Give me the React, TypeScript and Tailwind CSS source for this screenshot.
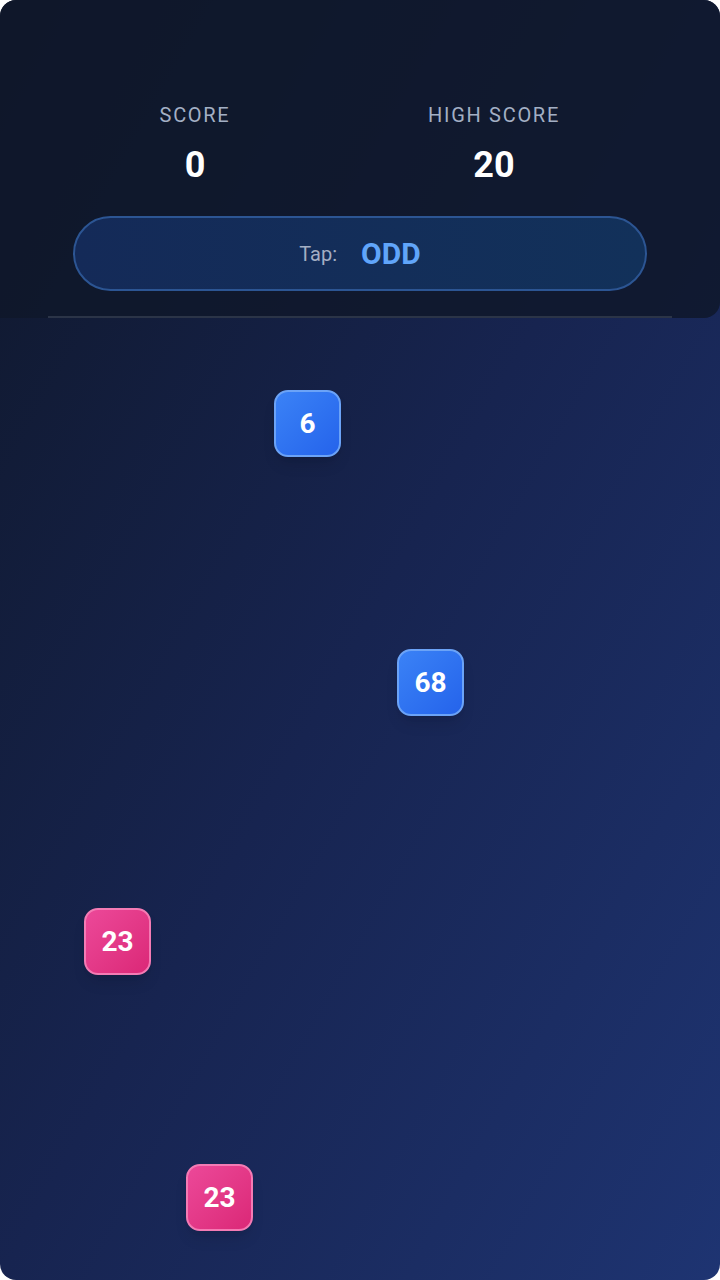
import React from "react";

const tiles = [
  { n: "6", x: 274, y: 390, c: "blue" },
  { n: "68", x: 397, y: 649, c: "blue" },
  { n: "23", x: 84, y: 908, c: "pink" },
  { n: "23", x: 186, y: 1164, c: "pink" },
];

export default function App() {
  return (
    <div className="w-[720px] h-[1280px] bg-white" style={{ fontFamily: "Roboto, 'Noto Sans', sans-serif" }}>
      <div className="relative w-full h-full rounded-2xl overflow-hidden bg-gradient-to-br from-[#0f172a] via-[#172450] to-[#1e3472]">
        <div className="w-full bg-[#0f172a]/85 rounded-br-2xl pt-[103px] flex flex-col">
          <div className="flex pl-[95px] gap-[99px]">
            <div className="w-[200px] flex flex-col items-center">
              <div className="text-[20px] leading-6 tracking-[0.085em] text-[#a3afc4]">SCORE</div>
              <div className="mt-[18px] text-[36px] leading-[40px] font-bold text-white">0</div>
            </div>
            <div className="w-[200px] flex flex-col items-center">
              <div className="text-[20px] leading-6 tracking-[0.085em] text-[#a3afc4]">HIGH SCORE</div>
              <div className="mt-[18px] text-[36px] leading-[40px] font-bold text-white">20</div>
            </div>
          </div>
          <div className="mx-[73px] mt-[31px] h-[75px] rounded-full border-2 border-[#2c5593] bg-gradient-to-r from-[#142a58] to-[#12315a] flex items-center justify-center gap-[24px]">
            <span className="text-[20px] text-[#a3afc4]">Tap:</span>
            <span className="text-[30px] font-bold text-[#60a5fa]">ODD</span>
          </div>
          <div className="mx-[48px] mt-[25px] h-[2px] bg-[#2b3447]" />
        </div>
        {tiles.map((t, i) => (
          <div
            key={i}
            className={
              "absolute w-[67px] h-[67px] rounded-[14px] border-2 flex items-center justify-center text-white font-bold text-[28px] shadow-lg " +
              (t.c === "blue"
                ? "bg-gradient-to-br from-[#3b82f6] to-[#2563eb] border-[#6ba3f7]"
                : "bg-gradient-to-br from-[#ec4899] to-[#db2777] border-[#f47bb4]")
            }
            style={{ left: t.x, top: t.y }}
          >
            {t.n}
          </div>
        ))}
      </div>
    </div>
  );
}
